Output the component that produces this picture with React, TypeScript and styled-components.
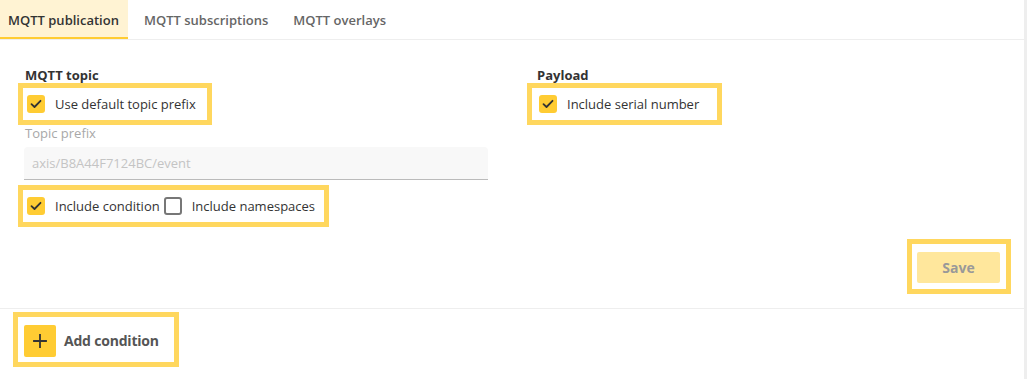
import React from "react";
import styled, { createGlobalStyle, css } from "styled-components";

const Global = createGlobalStyle`
  html, body { margin: 0; padding: 0; background: #ffffff; }
  body { font-family: "Open Sans", "Noto Sans", "Liberation Sans", sans-serif; color: #333333; }
  * { box-sizing: border-box; }
`;

const HL = "#ffd75e";

const highlight = css`
  outline: 5px solid ${HL};
`;

const Page = styled.div`
  width: 1027px;
  min-height: 379px;
  border-right: 3px solid #eeeeee;
  display: flex;
  flex-direction: column;
`;

const TabBar = styled.div`
  display: flex;
  gap: 8px;
  height: 40px;
  border-bottom: 1px solid #eeeeee;
`;

const Tab = styled.div<{ $active?: boolean }>`
  height: 39px;
  padding: 2px 9px 0 8px;
  display: flex;
  align-items: center;
  font-size: 13px;
  font-weight: 600;
  color: ${(p) => (p.$active ? "#333333" : "#666666")};
  background: ${(p) => (p.$active ? "#fff3d3" : "transparent")};
  border-bottom: 2px solid ${(p) => (p.$active ? "#ffcc33" : "transparent")};
`;

const Form = styled.div`
  padding: 26px 24px 19px;
  border-bottom: 1px solid #eeeeee;
`;

const Columns = styled.div`
  display: grid;
  grid-template-columns: 464px 464px;
  column-gap: 48px;
`;

const Column = styled.div`
  display: flex;
  flex-direction: column;
  align-items: flex-start;
`;

const SectionTitle = styled.div`
  font-size: 13px;
  font-weight: 700;
  line-height: 18px;
  color: #333333;
  padding-left: 1px;
`;

const CheckRow = styled.div<{ $shift: number; $padL: number; $padR: number; $mt: number }>`
  ${highlight};
  display: flex;
  align-items: center;
  height: 32px;
  margin-left: ${(p) => p.$shift}px;
  margin-top: ${(p) => p.$mt}px;
  padding: 0 ${(p) => p.$padR}px 0 ${(p) => p.$padL}px;
  gap: 4px;
`;

const CheckItem = styled.label`
  display: flex;
  align-items: center;
  gap: 10px;
  font-size: 13px;
  color: #333333;
  line-height: 18px;
`;

const Box = styled.span<{ $checked?: boolean }>`
  width: 18px;
  height: 18px;
  border-radius: 3px;
  flex: none;
  display: flex;
  align-items: center;
  justify-content: center;
  background: ${(p) => (p.$checked ? "#ffcc33" : "#ffffff")};
  border: ${(p) => (p.$checked ? "none" : "2px solid #777777")};
`;

const FieldLabel = styled.div`
  margin-top: 4px;
  font-size: 13px;
  line-height: 18px;
  color: #a8a8a8;
  padding-left: 1px;
`;

const Input = styled.div`
  margin-top: 5px;
  width: 464px;
  height: 33px;
  background: #f8f8f8;
  border-bottom: 1px solid #bbbbbb;
  border-radius: 4px 4px 0 0;
  display: flex;
  align-items: center;
  padding-left: 8px;
  font-size: 13px;
  color: #c4c4c4;
`;

const Actions = styled.div`
  display: flex;
  justify-content: flex-end;
  margin-top: 22px;
  margin-right: -6px;
`;

const SaveWrap = styled.div`
  ${highlight};
  padding: 8px 6px 6px 5px;
`;

const SaveButton = styled.button`
  width: 83px;
  height: 31px;
  border: none;
  border-radius: 2px;
  background: #ffe79c;
  color: #999999;
  font-family: inherit;
  font-size: 14px;
  font-weight: 700;
  display: flex;
  align-items: center;
  justify-content: center;
`;

const Bottom = styled.div`
  padding: 8px 0 0 18px;
`;

const AddButton = styled.div`
  ${highlight};
  display: inline-flex;
  align-items: flex-start;
  gap: 8px;
  width: 156px;
  height: 45px;
  padding: 8px 0 0 6px;
`;

const PlusBox = styled.span`
  width: 32px;
  height: 32px;
  border-radius: 2px;
  background: #ffcc33;
  display: flex;
  align-items: center;
  justify-content: center;
`;

const AddLabel = styled.span`
  font-size: 14px;
  font-weight: 700;
  color: #555555;
  line-height: 32px;
  letter-spacing: -0.2px;
`;

const Check = () => (
  <svg width="12" height="10" viewBox="0 0 12 10" fill="none">
    <path d="M1.5 5.2 L4.5 8 L10.5 1.8" stroke="#333" strokeWidth="1.8" strokeLinecap="round" strokeLinejoin="round" />
  </svg>
);

const Checkbox = ({ checked, label }: { checked?: boolean; label: string }) => (
  <CheckItem>
    <Box $checked={checked}>{checked && <Check />}</Box>
    {label}
  </CheckItem>
);

export default function App() {
  return (
    <>
      <Global />
      <Page>
        <TabBar>
          <Tab $active>MQTT publication</Tab>
          <Tab>MQTT subscriptions</Tab>
          <Tab>MQTT overlays</Tab>
        </TabBar>
        <Form>
          <Columns>
            <Column>
              <SectionTitle>MQTT topic</SectionTitle>
              <CheckRow $shift={-1} $padL={4} $padR={11} $mt={4}>
                <Checkbox checked label="Use default topic prefix" />
              </CheckRow>
              <FieldLabel>Topic prefix</FieldLabel>
              <Input>axis/B8A44F7124BC/event</Input>
              <CheckRow $shift={-1} $padL={4} $padR={9} $mt={10}>
                <Checkbox checked label="Include condition" />
                <Checkbox label="Include namespaces" />
              </CheckRow>
            </Column>
            <Column>
              <SectionTitle>Payload</SectionTitle>
              <CheckRow $shift={-4} $padL={7} $padR={18} $mt={4}>
                <Checkbox checked label="Include serial number" />
              </CheckRow>
            </Column>
          </Columns>
          <Actions>
            <SaveWrap>
              <SaveButton>Save</SaveButton>
            </SaveWrap>
          </Actions>
        </Form>
        <Bottom>
          <AddButton>
            <PlusBox>
              <svg width="14" height="14" viewBox="0 0 14 14">
                <path d="M7 1v12M1 7h12" stroke="#333" strokeWidth="1.8" strokeLinecap="square" />
              </svg>
            </PlusBox>
            <AddLabel>Add condition</AddLabel>
          </AddButton>
        </Bottom>
      </Page>
    </>
  );
}
